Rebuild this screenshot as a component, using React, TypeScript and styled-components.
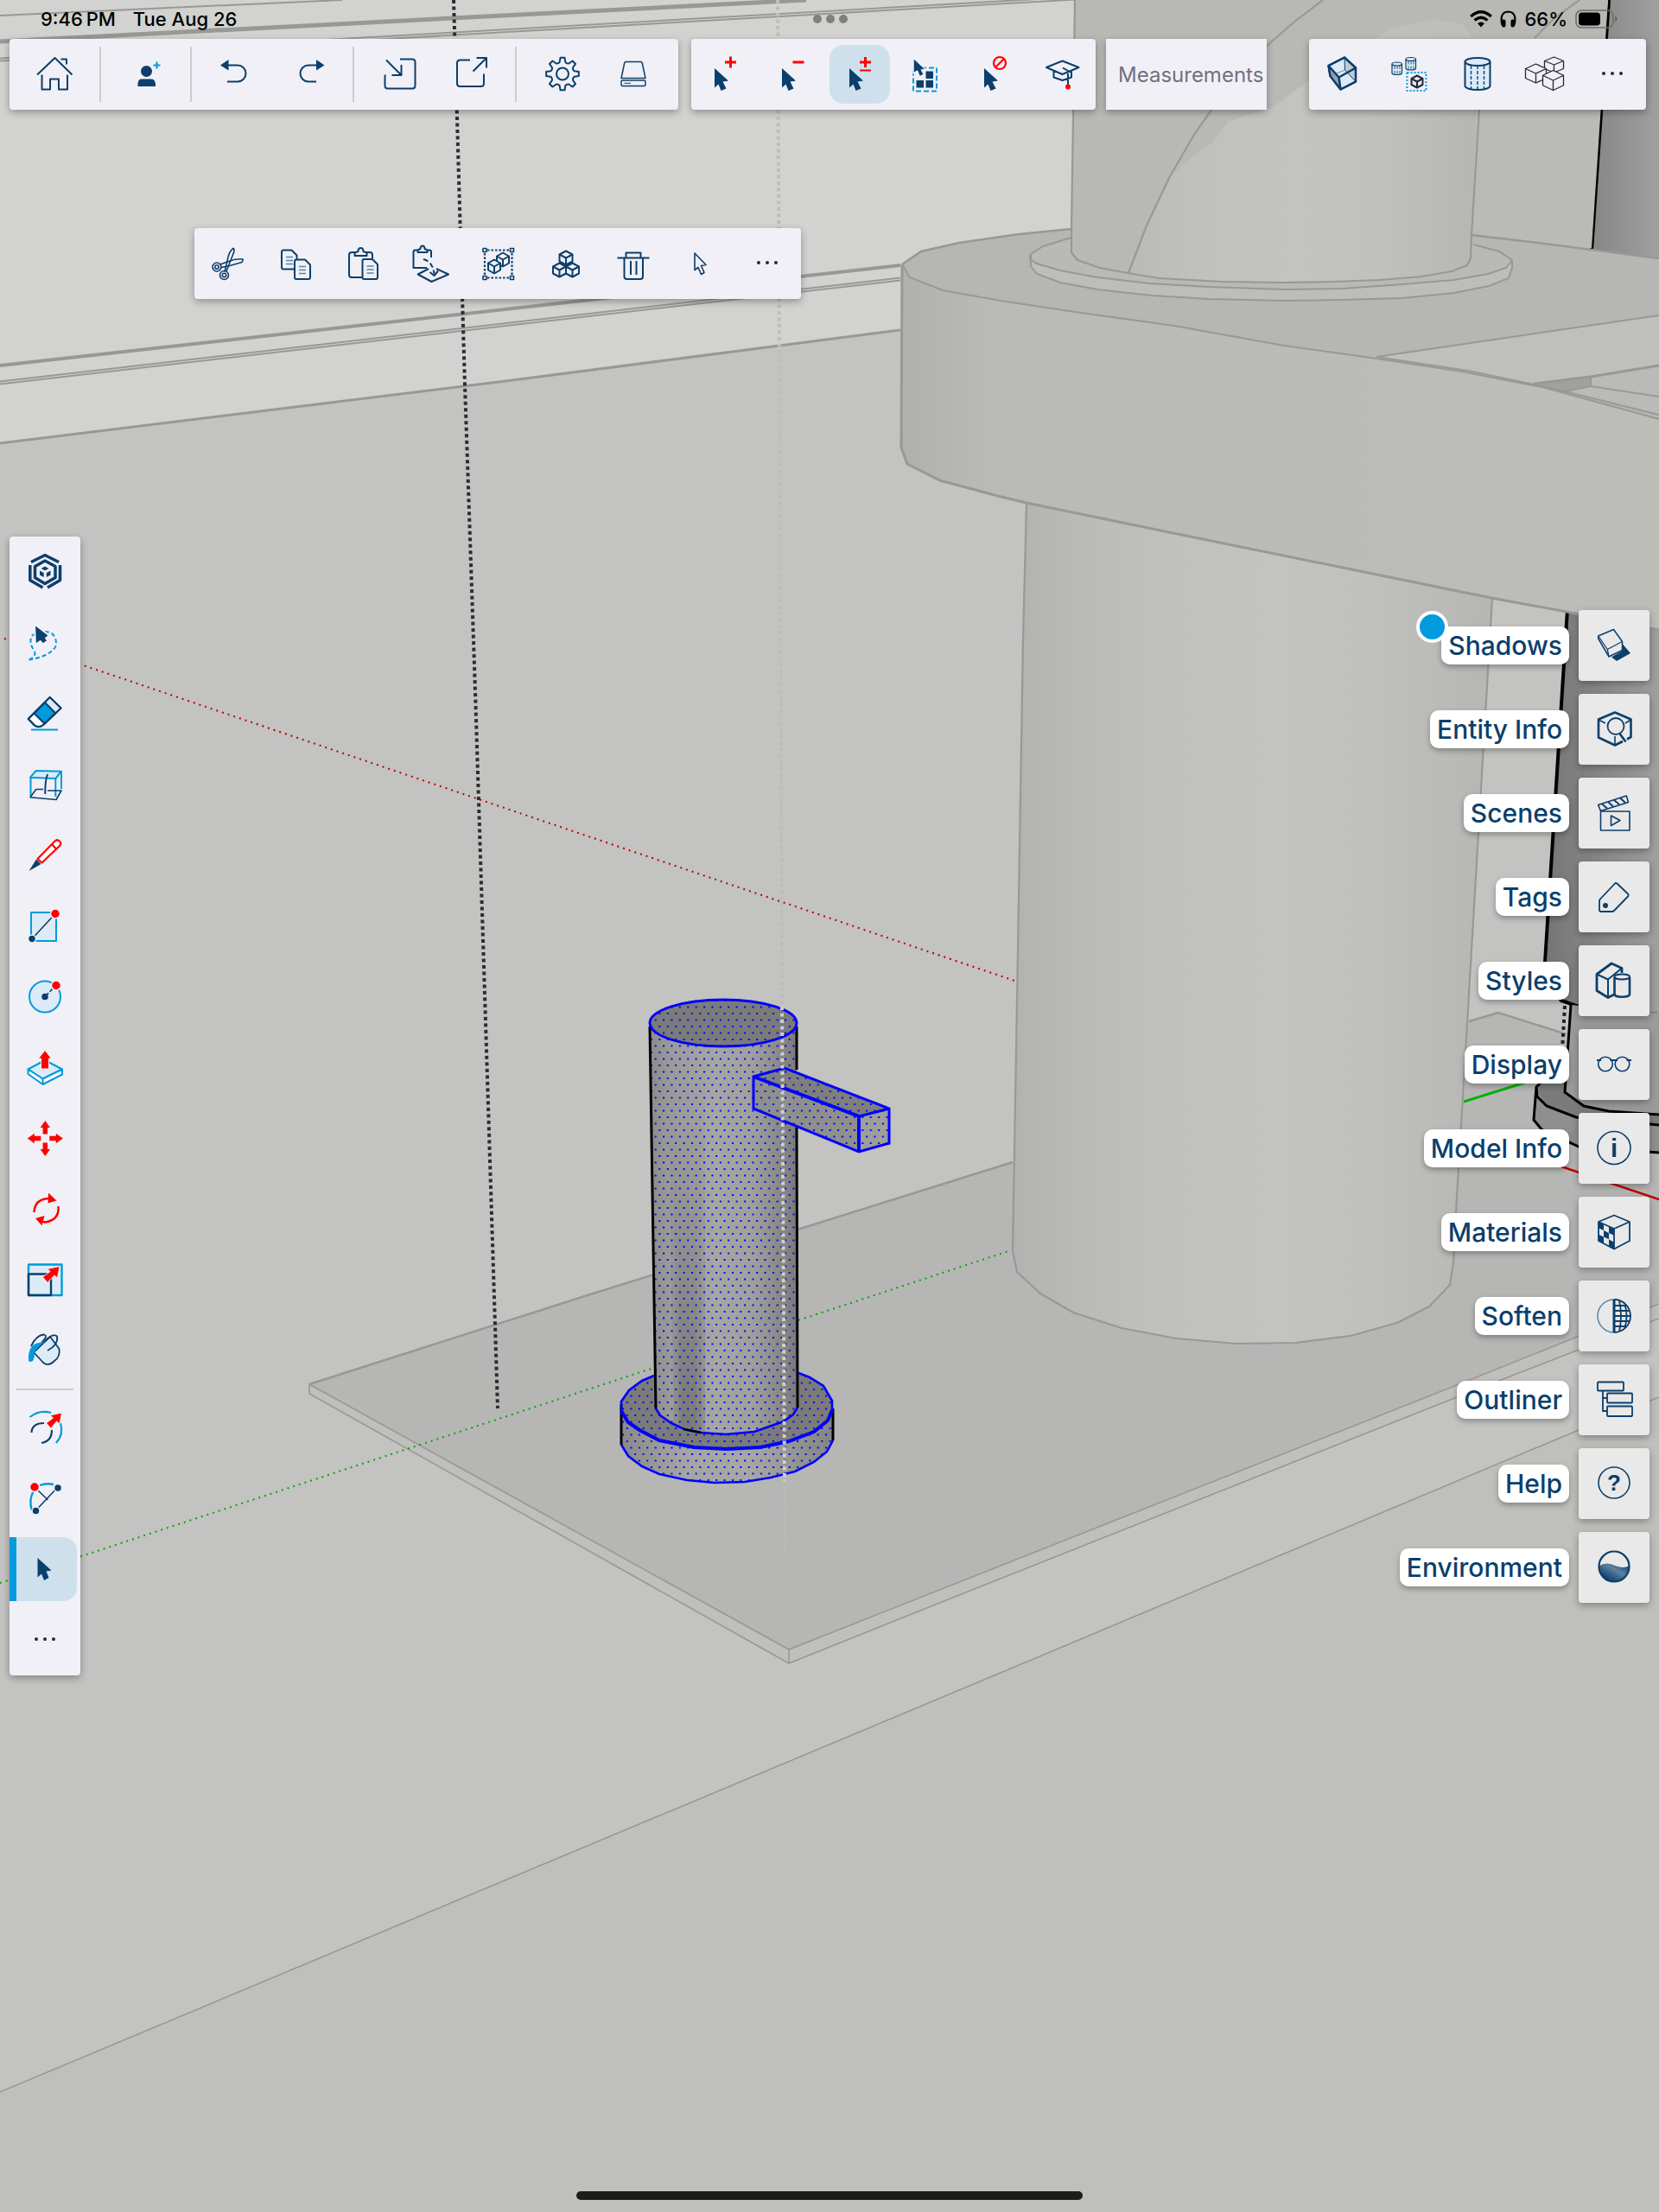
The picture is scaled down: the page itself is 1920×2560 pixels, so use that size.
import React from "react";
import styled, { createGlobalStyle, css } from "styled-components";

const NAVY = "#0b3f6c";
const BLUE = "#009bdc";
const PALE = "#dcebf7";
const RED = "#ff0000";
const INK = "#2b2536";

const GlobalStyle = createGlobalStyle`
  * { box-sizing: border-box; }
  html, body { margin: 0; padding: 0; }
  body {
    background: #bfbfba;
    font-family: Inter, "Liberation Sans", sans-serif;
    color: #000;
  }
`;

const Page = styled.div`
  position: relative;
  display: flex;
  flex-direction: column;
  min-height: 100vh;
  overflow: hidden;
`;

const SceneCanvas = styled.svg`
  position: absolute;
  inset: 0;
  width: 100%;
  height: 100%;
`;

const Surface = styled.div`
  position: relative;
  display: flex;
  flex-direction: column;
  flex: 1;
`;

/* ---------- status bar ---------- */

const StatusBar = styled.div`
  display: grid;
  grid-template-columns: 1fr auto 1fr;
  align-items: center;
  height: 45px;
  padding: 0 46px 2px 47px;
  font-size: 22px;
  line-height: 28px;
  font-weight: 500;
`;

const StatusLeft = styled.div`
  display: flex;
  gap: 20px;
`;

const StatusRight = styled.div`
  display: flex;
  justify-content: flex-end;
  align-items: center;
  gap: 9px;
`;

const Multitask = styled.button`
  display: flex;
  gap: 5px;
  padding: 0;
  border: 0;
  background: none;
`;

const MultitaskDot = styled.span`
  width: 10px;
  height: 10px;
  border-radius: 50%;
  background: #80807c;
`;

/* ---------- toolbars ---------- */

const panel = css`
  background: #f1f0f6;
  border-radius: 4px;
  box-shadow: 0 3px 8px rgba(0, 0, 0, 0.32);
`;

const Header = styled.header`
  display: flex;
  padding: 0 15px 0 11px;
`;

const Toolbar = styled.div`
  ${panel}
  display: flex;
  flex: none;
  height: 82px;
`;

const ModeToolbar = styled(Toolbar)`
  margin-left: 15px;
`;

const ViewToolbar = styled(Toolbar)`
  margin-left: auto;
`;

const ContextToolbar = styled(Toolbar)`
  align-self: flex-start;
  margin: 137px 0 0 225px;
`;

const Group = styled.div`
  display: flex;
  justify-content: center;
  min-width: 105px;
  padding: 0 10px;
`;

const Divider = styled.span`
  width: 2px;
  margin: 9px -1px;
  background: #cbcbd0;
`;

const ToolButton = styled.button<{ $width?: number; $active?: boolean }>`
  display: flex;
  align-items: center;
  justify-content: center;
  width: ${(p) => p.$width ?? 78}px;
  height: 82px;
  padding: 0;
  border: 0;
  background: none;
  ${(p) =>
    p.$active &&
    css`
      height: 68px;
      width: 70px;
      margin: 7px 4px;
      border-radius: 16px;
      background: #cee0ec;
    `}
`;

const Measurements = styled.input`
  width: 186px;
  height: 82px;
  margin-left: 12px;
  padding: 0 0 0 14px;
  border: 0;
  background: #f1f0f6;
  box-shadow: 0 3px 8px rgba(0, 0, 0, 0.32);
  font: 400 24px/28px Inter, "Liberation Sans", sans-serif;
  color: ${INK};
  &::placeholder {
    color: #73707f;
    opacity: 1;
  }
`;

/* ---------- side rails ---------- */

const Workspace = styled.main`
  display: flex;
  justify-content: space-between;
  align-items: flex-start;
  padding: 0 11px;
`;

const ToolRail = styled.nav`
  ${panel}
  display: flex;
  flex-direction: column;
  width: 82px;
  margin-top: 275px;
`;

const RailButton = styled.button<{ $active?: boolean }>`
  display: flex;
  align-items: center;
  justify-content: center;
  height: 82px;
  padding: 0;
  border: 0;
  background: none;
  ${(p) =>
    p.$active &&
    css`
      height: 74px;
      margin: 4px 4px 4px 0;
      padding-right: 4px;
      border-left: 8px solid ${BLUE};
      border-radius: 0 16px 16px 0;
      background: #cee0ec;
    `}
`;

const RailRule = styled.span`
  height: 2px;
  margin: 2px 8px;
  background: #cbcbd0;
`;

const PanelList = styled.aside`
  display: flex;
  flex-direction: column;
  gap: 15px;
  margin-top: 360px;
`;

const PanelRow = styled.div`
  display: flex;
  justify-content: flex-end;
  align-items: center;
  gap: 11px;
`;

const PanelLabel = styled.label`
  position: relative;
  height: 44px;
  padding: 0 8px;
  border-radius: 10px;
  background: #fff;
  box-shadow: 0 3px 6px rgba(0, 0, 0, 0.3);
  font-size: 30px;
  line-height: 44px;
  font-weight: 500;
  color: ${NAVY};
  white-space: nowrap;
`;

const NewBadge = styled.span`
  position: absolute;
  top: -18px;
  left: -29px;
  width: 37px;
  height: 37px;
  border: 4px solid #fff;
  border-radius: 50%;
  background: ${BLUE};
`;

const Tile = styled.button`
  display: flex;
  align-items: center;
  justify-content: center;
  width: 82px;
  height: 82px;
  padding: 0;
  border: 0;
  border-radius: 4px;
  background: #e9e9e9;
  box-shadow: 0 3px 8px rgba(0, 0, 0, 0.32);
`;

const HomeIndicator = styled.div`
  align-self: center;
  width: 586px;
  height: 10px;
  margin: auto 0 14px;
  border-radius: 5px;
  background: #1c1c1c;
`;

const Glyph = styled.svg`
  flex: none;
  width: 48px;
  height: 48px;
  fill: none;
  stroke: ${NAVY};
  stroke-width: 2;
  stroke-linejoin: round;
  overflow: visible;
`;

/* ---------- drawing helpers ---------- */

type P = [number, number];
const pts = (list: P[]) => list.map((p) => p.join(",")).join(" ");

function gearPath(cx: number, cy: number, teeth: number, outer: number, inner: number) {
  const out: string[] = [];
  const step = (Math.PI * 2) / teeth;
  for (let i = 0; i < teeth; i++) {
    const a = i * step - Math.PI / 2;
    const at = (r: number, d: number) =>
      `${(cx + r * Math.cos(a + d)).toFixed(2)} ${(cy + r * Math.sin(a + d)).toFixed(2)}`;
    out.push(`${i ? "L" : "M"}${at(outer, -0.13)} L${at(outer, 0.13)} L${at(inner, 0.24)}`);
    out.push(`Q${at(inner - 1.5, step / 2)} ${at(inner, step - 0.24)}`);
  }
  return out.join(" ") + "Z";
}

interface CubeProps { x: number; y: number; w: number; h: number; color?: string; fill?: string; sw?: number }
const Cube = ({ x, y, w, h, color = NAVY, fill = "none", sw = 2 }: CubeProps) => (
  <g stroke={color} strokeWidth={sw} fill={fill}>
    <path d={`M${x} ${y - h} L${x + w} ${y - h / 2} V${y + h / 2} L${x} ${y + h} L${x - w} ${y + h / 2} V${y - h / 2}Z`} />
    <path fill="none" d={`M${x - w} ${y - h / 2} L${x} ${y} L${x + w} ${y - h / 2} M${x} ${y} V${y + h}`} />
  </g>
);

interface CylProps { x: number; y: number; w: number; h: number; ry: number; sw: number; lines: number[] }
const Cylinder = ({ x, y, w, h, ry, sw, lines }: CylProps) => (
  <g strokeWidth={sw} fill={PALE}>
    <path d={`M${x} ${y + ry} V${y + h - ry} A${w / 2} ${ry} 0 0 0 ${x + w} ${y + h - ry} V${y + ry}`} />
    <ellipse cx={x + w / 2} cy={y + ry} rx={w / 2} ry={ry} />
    {lines.map((l) => (
      <path key={l} d={`M${x + l} ${y + ry * 2} V${y + h - 1}`} strokeDasharray="4 2" strokeWidth={sw * 0.7} />
    ))}
  </g>
);

const Cursor = ({ x = 12, y = 17, s = 1 }: { x?: number; y?: number; s?: number }) => (
  <path
    fill={NAVY}
    stroke="none"
    transform={`translate(${x} ${y}) scale(${s})`}
    d="M0 0 L16 14.5 L9.5 15.5 L13.5 23.5 L7.5 26 L4.5 18.5 L0 22.5Z"
  />
);

const Dots = () => (
  <g fill={INK} stroke="none">
    <circle cx="14" cy="23" r="2" />
    <circle cx="24" cy="23" r="2" />
    <circle cx="34" cy="23" r="2" />
  </g>
);

const Sheet = ({ x, y, w, h }: { x: number; y: number; w: number; h: number }) => (
  <g>
    <path
      fill="#f1f0f6"
      d={`M${x + 2} ${y} H${x + w - 6} L${x + w} ${y + 6} V${y + h - 2} Q${x + w} ${y + h} ${x + w - 2} ${y + h} H${x + 2} Q${x} ${y + h} ${x} ${y + h - 2} V${y + 2} Q${x} ${y} ${x + 2} ${y}Z`}
    />
    <path strokeWidth="1.5" stroke="#5b84a5" d={`M${x + 5} ${y + 8} h8 M${x + 5} ${y + 12} h8 M${x + 5} ${y + 16} h8`} />
  </g>
);

/* ---------- icons ---------- */

const icons: Record<string, React.ReactNode> = {
  home: (
    <path d="M3 24.500 L23.500 5 L43.500 24.500 M30.500 6.500 H37 V12.500 M8.500 24.500 V41.500 H18 V29.500 H28 V41.500 H38 V24.500" />
  ),
  user: (
    <>
      <g fill={NAVY} stroke="none">
        <circle cx="24.500" cy="20.500" r="6.500" />
        <path d="M14.500 38 V35 Q15 30 18 29.500 H31 Q34 30 35 35 V38Z" />
      </g>
      <path stroke={BLUE} d="M36.500 9.500 V17.500 M32.500 13.500 H40.500" />
    </>
  ),
  undo: (
    <>
      <path d="M14 13.500 H26 A9.500 9.500 0 0 1 26 32.500 H14" />
      <path fill={NAVY} stroke="none" d="M6 13.500 L15.500 7 V19.500Z" />
    </>
  ),
  redo: (
    <>
      <path d="M34 13.500 H24 A9.500 9.500 0 0 0 24 32.500 H33" />
      <path fill={NAVY} stroke="none" d="M42.500 13.500 L33 7 V19.500Z" />
    </>
  ),
  import: (
    <path d="M26 6.500 H40 Q43.500 6.500 43.500 10 V37 Q43.500 40.500 40 40.500 H12 Q8.500 40.500 8.500 37 V24.500 M10 7.500 L27 24.500 M27.500 13 V25 H16.500" />
  ),
  export: (
    <path d="M23 7.500 H11.500 Q8 7.500 8 11 V34.500 Q8 38 11.500 38 H35.500 Q39 38 39 34.500 V23.500 M26.500 20.500 L41.500 5.500 M30.500 5 H42 V16.500" />
  ),
  gear: (
    <>
      <path d={gearPath(26, 23.5, 8, 19, 14)} />
      <circle cx="26" cy="23.500" r="7" />
    </>
  ),
  drive: (
    <g strokeWidth="1.500">
      <path d="M15.500 9.500 H32.500 Q34 9.500 34.300 11 L38 28.500 H10 L13.700 11 Q14 9.500 15.500 9.500Z" />
      <rect x="10" y="31" width="28" height="6.500" rx="1.500" />
      <path d="M13.500 34.300 H21" strokeWidth="1" />
    </g>
  ),
  selAdd: (
    <>
      <Cursor />
      <path stroke={RED} strokeWidth="3" d="M30.500 3.500 V16.500 M24 10 H37" />
    </>
  ),
  selSub: (
    <>
      <Cursor />
      <path stroke={RED} strokeWidth="3" d="M24.500 10 H37.500" />
    </>
  ),
  selToggle: (
    <>
      <Cursor />
      <path stroke={RED} strokeWidth="3" d="M30.500 4 V16 M24 10 H37" />
      <path stroke={RED} strokeWidth="2" d="M24 19.500 H37" />
    </>
  ),
  selAll: (
    <>
      <rect x="8" y="16.500" width="27" height="27" stroke={BLUE} strokeDasharray="6 3" strokeWidth="2" />
      <path fill={NAVY} stroke="none" d="M22.500 20.500 h8.500 v8.500 h-8.500z M11.500 31 h8.500 v8.500 h-8.500z M22.500 31 h8.500 v8.500 h-8.500z" />
      <path fill={NAVY} stroke="#f1f0f6" strokeWidth="1.500" d="M8 5 L22 18 L17.500 19 L20.500 24 L15.500 27 L12.500 20 L8 23Z" />
    </>
  ),
  selNone: (
    <>
      <Cursor />
      <g stroke={RED} strokeWidth="2.200">
        <circle cx="30" cy="11" r="7" />
        <path d="M25 16 L35 6" />
      </g>
    </>
  ),
  learn: (
    <>
      <path d="M6 16 L24.500 8.500 L43.500 16 L24.500 24Z M14.500 20 V27.500 L24.500 31 L35 27.500 V20 M25 16.500 L31 20 V36" />
      <circle cx="31" cy="38.500" r="3" fill={RED} stroke="none" />
    </>
  ),
  cube: (
    <g transform="translate(-1.500 -1)">
      <path fill={PALE} d="M9 15 L27.500 5.500 L40.500 17.500 V33.500 L23 42.500 L11 27Z" />
      <path fill="#98a4ae" strokeWidth="1" d="M9 15 L21 28.500 L23 42.500 L11 27Z" />
      <path fill="#c2c9d0" strokeWidth="1" d="M27.500 5.500 L40.500 17.500 V33.500 L28 20Z" />
      <path strokeWidth="1" d="M11 27 L28 20" stroke="#7a8894" />
      <path strokeWidth="2.500" d="M9 15 L21 28.500 L40.500 17.500 M21 28.500 L23 42.500 M9 15 L27.500 5.500 L40.500 17.500 V33.500 L23 42.500 L11 27Z" />
    </g>
  ),
  xray: (
    <g transform="translate(-1.500 -1)">
      <Cylinder x={4.5} y={11} w={11.5} h={14.5} ry={2} sw={1.2} lines={[3, 6, 9]} />
      <Cylinder x={20.5} y={5.5} w={11.5} h={14.5} ry={2} sw={1.2} lines={[3, 6, 9]} />
      <rect x="22" y="23" width="22" height="21" stroke={BLUE} strokeDasharray="2 2" />
      <Cube x={33.5} y={33.5} w={6.5} h={7} color={INK} fill={PALE} sw={2} />
    </g>
  ),
  cylinder: <Cylinder x={9.5} y={5} w={29} h={37} ry={4.5} sw={2} lines={[7, 14.5, 22]} />,
  cubes: (
    <g transform="translate(-1 -1)">
      <Cube x={35.5} y={14} w={11} h={9} color={INK} fill="#f1f0f6" sw={1.3} />
      <Cube x={14.5} y={24} w={12} h={11} color={INK} fill="#f1f0f6" sw={1.3} />
      <Cube x={34.5} y={32} w={12} h={11.5} color={INK} fill="#f1f0f6" sw={1.3} />
    </g>
  ),
  more: <Dots />,
  cut: (
    <g strokeWidth="1.600">
      <path d="M30.500 6 Q25 9 23 21 L20 33.500 M30.500 6 L31 10 L25.500 24 L22 33" />
      <path d="M41.500 19 Q33 18 23 22 L15 25 M41.500 19 L40 22.500 L26 26.500 L16 28.500" />
      <circle cx="11" cy="28" r="5" />
      <circle cx="11" cy="28" r="2.200" />
      <circle cx="19.500" cy="37.500" r="5" />
      <circle cx="19.500" cy="37.500" r="2.200" />
    </g>
  ),
  copy: (
    <>
      <Sheet x={8} y={8.5} w={17.5} h={22} />
      <Sheet x={23} y={19.5} w={18} h={22.5} />
    </>
  ),
  paste: (
    <>
      <path d="M15 11 H11 Q8 11 8 14 V37 Q8 40 11 40 H23 M28 11 H32 Q35 11 35 14 V18" />
      <path d="M14.500 15 V11.500 L18.500 10 Q18.500 6 21.500 6 Q24.500 6 24.500 10 L28.500 11.500 V15Z" />
      <Sheet x={23.5} y={19} w={17.5} h={23} />
    </>
  ),
  pasteInPlace: (
    <>
      <path d="M9 8.500 H6.500 Q4.500 8.500 4.500 10.500 V29 H20 M21 8.500 H23 Q25 8.500 25 10.500 V17" />
      <path d="M9.500 11 V8.500 L12.500 7 Q12.500 3.500 15 3.500 Q17.500 3.500 17.500 7 L20.500 8.500 V11Z" />
      <path d="M22 30 L9.700 36.500 L25.500 45 L45 36.500 L31 30" />
      <path strokeDasharray="6 3" d="M16 19 Q27 22 28.500 36" />
      <path d="M23.500 34 L28.500 38 L33 32.500" />
    </>
  ),
  group: (
    <>
      <path strokeDasharray="2.500 2" strokeWidth="2.200" d="M12 8.500 H38 M12 40.500 H38 M9 12 V37 M40.500 12 V37" />
      <path fill="#f1f0f6" strokeWidth="1.600" d="M7 6.500 h4 v4 h-4z M38.500 6.500 h4 v4 h-4z M7 38.500 h4 v4 h-4z M38.500 38.500 h4 v4 h-4z" />
      <Cube x={30} y={19.5} w={7} h={8} fill="#f1f0f6" sw={2} />
      <Cube x={20} y={27.5} w={7} h={8} fill="#f1f0f6" sw={2} />
    </>
  ),
  component: (
    <>
      <Cube x={25} y={17.5} w={7.5} h={8} fill="#f1f0f6" sw={2} />
      <Cube x={17.5} y={31.5} w={7.5} h={8} fill="#f1f0f6" sw={2} />
      <Cube x={32.5} y={31.5} w={7.5} h={8} fill="#f1f0f6" sw={2} />
    </>
  ),
  trash: (
    <path d="M6.500 17.500 H43.500 M16.500 17.500 V11.500 H33.500 V17.500 M14.500 17.500 V39 Q14.500 42 17.500 42 H33 Q36 42 36 39 V17.500 M22 21 V37 M28.500 21 V37" />
  ),
  pointer: <path strokeWidth="1.600" d="M18 12 L31 25.500 L25.500 26.500 L29 34.500 L25.500 36.500 L22 28.500 L18 31.500Z" />,

  logo: (
    <>
      <g strokeWidth="3.500">
        <path d="M8 12.500 L24 4.500 L40 12.500" />
        <path d="M6.800 16 V33.500 L21.500 42 M41.500 16 V33.500 L27 42" />
      </g>
      <path strokeWidth="3.500" d="M24 11 L36 17.500 V30.500 L24 37.500 L12.500 30.500 V17.500Z" />
      <g fill={NAVY} stroke="none">
        <path d="M24 17.500 L28.500 20 L24 22.200 L19.500 20Z" />
        <path d="M18 22.500 L22.700 25 V30 L18 27.500Z" />
        <path d="M30.500 22.500 L25.800 25 V30 L30.500 27.500Z" />
      </g>
    </>
  ),
  lasso: (
    <>
      <path stroke={BLUE} strokeDasharray="5 3" d="M5.500 43.500 Q14 40 12 34 Q4 22 10 15 Q20 8 32 13 Q39 20 36 29 Q28 40 5.500 43.500" />
      <path fill={NAVY} stroke="#f1f0f6" d="M12 2.500 L29 15.500 L25 18.500 L27.500 21.500 L21.500 25.500 L18.500 22 L13 26Z" />
    </>
  ),
  eraser: (
    <>
      <path fill="#fff" d="M4.700 30 L29.700 5 L42.500 17.500 L22 37 Q17 41 12 37.500Z" />
      <path fill={PALE} stroke="none" d="M24 11 L29.700 5.800 L41.500 17.500 L36 22.500Z" />
      <path fill={BLUE} d="M11.500 23.500 L24 11 L36.300 23.500 L23.500 35.500Z" />
      <path d="M4.700 30 L29.700 5 L42.500 17.500 L22 37 Q17 41 12 37.500Z" />
      <path stroke={BLUE} d="M8 42.500 H39" />
    </>
  ),
  section: (
    <>
      <path fill={PALE} stroke={BLUE} d="M7 15.700 L13.700 8 L43 8.700 L36.300 17Z" />
      <path stroke={BLUE} d="M7.500 16 V37 M36.300 17 V38 M43 9 V29" />
      <path strokeWidth="1.600" d="M22 29.500 H13.700 L7 38.700 L37 41.500 L43 31 H27" />
      <path strokeWidth="2" d="M27 12 Q24 20 24.300 35" />
    </>
  ),
  pencil: (
    <>
      <path fill={NAVY} stroke="none" d="M5.500 42 L14 28.500 L19.500 34Z" />
      <path stroke={RED} fill="#fff" strokeWidth="2.200" d="M15.500 28 L35.500 7.500 Q38 5 41 7.500 Q43.500 10 41 13 L20.500 32.500Z M32 11 L37 16.500" />
    </>
  ),
  rectangle: (
    <>
      <rect x="8" y="8" width="29" height="33" fill={PALE} stroke={BLUE} />
      <path d="M9 38.500 L36 9.500" strokeWidth="1.600" />
      <circle cx="9" cy="38.500" r="4.500" fill={NAVY} stroke="#f1f0f6" strokeWidth="1.500" />
      <circle cx="36" cy="9.500" r="5.500" fill={RED} stroke="#f1f0f6" strokeWidth="1.500" />
    </>
  ),
  circle: (
    <>
      <circle cx="24" cy="23.500" r="18" fill={PALE} stroke={BLUE} />
      <path d="M24 23.500 L36 11" strokeDasharray="6 2" strokeWidth="1.600" />
      <circle cx="24" cy="23.500" r="3.800" fill={NAVY} stroke="none" />
      <circle cx="37" cy="10.500" r="5.500" fill={RED} stroke="#f1f0f6" strokeWidth="1.500" />
    </>
  ),
  pushPull: (
    <>
      <path fill={PALE} stroke={BLUE} d="M4.500 25.500 L24 15 L44 25.500 L21.500 36.500Z" />
      <path fill="#fff" stroke={BLUE} d="M4.500 25.500 L21.500 36.500 L44 25.500 V31.500 L21.500 43 L4.500 31Z M21.500 36.500 V43" />
      <path fill={RED} stroke="#f1f0f6" strokeWidth="1" d="M24 3.500 L31.500 13 H28.500 V25 H19.500 V13 H16.500Z" />
    </>
  ),
  move: (
    <g fill={RED} stroke="none">
      {[0, 90, 180, 270].map((r) => (
        <path key={r} transform={`rotate(${r} 24.3 23.5)`} d="M24.300 3 L30 11 H27 V18.500 H21.600 V11 H18.600Z" />
      ))}
    </g>
  ),
  rotate: (
    <>
      <path stroke={RED} strokeWidth="2.400" d="M11.500 27 Q12 12 28 11 L32 12 M39.500 20 Q41 36 24 38.500 L18 37" />
      <path fill={RED} stroke="none" d="M28 4.500 L37.500 13.500 L27.500 16.500Z M13 34 L23.500 31 L20.500 42.500Z" />
    </>
  ),
  scale: (
    <>
      <rect x="5" y="5.500" width="38.500" height="35.500" fill={PALE} stroke={BLUE} strokeWidth="2.400" />
      <rect x="5" y="16.500" width="26" height="24.500" strokeWidth="2.400" />
      <path fill={RED} stroke={PALE} strokeWidth="1" d="M41 7.500 L38.500 21 L35 18 L27 26.500 L21.500 20 L30 13.500 L27 10.500Z" />
    </>
  ),
  paint: (
    <>
      <path fill={PALE} strokeWidth="1.800" d="M11 25 L30 7 L40.500 21 Q42 30 35 35 Q28 42 22 37Z" />
      <path strokeWidth="1.800" d="M8 18 Q14 5 23 4.500 Q28 6 20 14 M25 11 Q33 3 38 6.500 Q40 16 27 23" />
      <path fill={BLUE} stroke="none" d="M5 35 Q4 16 17 14 L24 13 Q13 20 12 26 Q12 32 10 35 Q7 37 5 35Z" />
    </>
  ),
  offset: (
    <>
      <path stroke={BLUE} strokeWidth="2.200" d="M6.500 12 Q18 3 31 7 M42 19 Q46 32 37 42" />
      <path strokeWidth="2.200" d="M8.500 30 Q9 19 23 19 M32 27 Q32 40 20 42" />
      <path fill={RED} stroke="#f1f0f6" strokeWidth="1" d="M43.500 7 L41 20 L37.500 17 L31 25 L25.500 19 L33.500 13 L30 10Z" />
    </>
  ),
  arc: (
    <>
      <path stroke={BLUE} strokeWidth="2.400" d="M18 9 Q26 6 34 8 M10.500 16 Q5 27 9 38" />
      <path strokeWidth="1.600" d="M15 14 L27.500 26 M38 12 L13.500 38" />
      <circle cx="12" cy="11" r="5.500" fill={RED} stroke="#f1f0f6" strokeWidth="1.500" />
      <circle cx="39" cy="12" r="4.500" fill={NAVY} stroke="#f1f0f6" strokeWidth="1.500" />
      <circle cx="13.500" cy="38.500" r="4.500" fill={NAVY} stroke="#f1f0f6" strokeWidth="1.500" />
    </>
  ),
  select: <path fill={NAVY} stroke="none" d="M15.500 11 L31.500 25.500 L25.500 26.500 L28.500 34 L23 37 L20 29.500 L15.500 33.500Z" />,

  shadows: (
    <>
      <path fill={NAVY} stroke="none" d="M34 22.500 L43 33 L27 42 L21 37.500 L34 30Z" />
      <path strokeWidth="1.500" fill="#e9e9e9" d="M5.700 13 L23.500 5.500 L33.500 19.500 L33.500 29.500 L18 37 L5.700 16Z" />
      <path strokeWidth="1.300" d="M5.700 13 L16.300 28.500 L33.500 19.500 M16.300 28.500 L18 37" />
    </>
  ),
  entity: (
    <>
      <path strokeWidth="2.600" d="M34 38 L25 42.500 L6 33.500 V12.500 L25 4.500 L43.500 12.500 V33 L39 35.500" />
      <path strokeWidth="1.600" d="M6 13 L14 17 M43.500 13 L37 17 M25 42 V32" />
      <circle cx="26" cy="20.500" r="9.500" strokeWidth="1.800" />
      <path strokeWidth="2.600" d="M30.500 29 L37.500 38.500" />
    </>
  ),
  scenes: (
    <g strokeWidth="1.600">
      <rect x="8.500" y="22" width="33.500" height="22" />
      <path d="M5.700 14.600 L38.300 4 L40.500 11.500 L8.500 21.500Z" />
      <path d="M10 13.500 L16 18.500 M17 11 L23 16.500 M24 9 L30 14 M31 6.500 L37 12" strokeWidth="2" />
      <path d="M20.500 27 L31 32.500 L20.500 38.500Z" />
    </g>
  ),
  tags: (
    <>
      <path strokeWidth="1.800" d="M7 39 V29 Q7 27.500 8 26.500 L25 8.500 Q26 7.500 27.500 8.500 L40.500 21 Q41 22.500 40 23.500 L24 40 Q23 41 21.500 41 H9 Q7 41 7 39Z" />
      <circle cx="14" cy="34" r="3" fill={NAVY} stroke="none" />
    </>
  ),
  styles: (
    <>
      <path strokeWidth="2.800" d="M24 40 L17 43.500 L4 35.500 V16.500 L21 4 L33 9.500 V15" />
      <path strokeWidth="2" d="M4 16.500 L17 22.500 L33 9.500 M17 22.500 V43.500" />
      <path strokeWidth="2.600" fill="#e9e9e9" d="M24.500 20 V40 A8.800 3 0 0 0 42 40 V20" />
      <ellipse cx="33.300" cy="19.500" rx="8.800" ry="3" fill="#e9e9e9" strokeWidth="2" />
    </>
  ),
  display: (
    <g strokeWidth="1.600">
      <circle cx="14" cy="23.500" r="8.300" />
      <circle cx="33.500" cy="23.500" r="8.300" />
      <path d="M4 19 H9 M19.500 19 H28 M38.500 19 H44" strokeWidth="2" />
    </g>
  ),
  info: (
    <>
      <circle cx="24" cy="23.500" r="19" strokeWidth="1.600" />
      <text x="24" y="33.500" fontSize="29" fontWeight="600" textAnchor="middle" fill={NAVY} stroke="none">i</text>
    </>
  ),
  materials: (
    <>
      <path strokeWidth="1.800" d="M24 4.500 L42 12 V34 L24 43.500 L6 34 V12Z M6 12 L24 20 L42 12 M24 20 V43.500" />
      <g fill={NAVY} stroke="none">
        <path d="M6 12 L12 14.700 V22 L6 19.300Z M18 17.300 L24 20 V27.800 L18 25.100Z M12 22 L18 25 V32.300 L12 29.500Z" />
        <path d="M6 26.700 L12 29.500 V37 L6 34Z M18 32.500 L24 35.500 V43.500 L18 40.500Z" />
      </g>
    </>
  ),
  soften: (
    <>
      <path strokeWidth="1.500" stroke="#5b84a5" d="M24 5 A19 19 0 0 0 24 43" />
      <path strokeWidth="1.800" d="M24 5 A19 19 0 0 1 24 43 M24 12 H38 M24 18 H42 M24 24 H43 M24 30 H42 M24 36 H38 M30 6 Q34 24 30 42 M36 9 Q41 24 36 39" />
      <path strokeWidth="3" d="M24 5 V43" />
    </>
  ),
  outliner: (
    <g strokeWidth="1.800">
      <rect x="5" y="3.500" width="30" height="10" rx="1" />
      <rect x="16" y="16.500" width="29" height="11" rx="1" />
      <rect x="16" y="31.500" width="29" height="11.500" rx="1" />
      <path d="M11 13.500 V37 H16 M11 22 H16" />
    </g>
  ),
  help: (
    <>
      <circle cx="24" cy="23" r="18" strokeWidth="1.600" />
      <text x="24" y="32" fontSize="26" fontWeight="600" textAnchor="middle" fill={NAVY} stroke="none">?</text>
    </>
  ),
  environment: (
    <>
      <defs>
        <linearGradient id="sea" x1="0" x2="1" y1="1" y2="0">
          <stop offset="0.200" stopColor={NAVY} />
          <stop offset="0.600" stopColor="#5f80a0" />
          <stop offset="1" stopColor={NAVY} />
        </linearGradient>
      </defs>
      <path fill="url(#sea)" stroke="none" d="M6 23 Q14 17 24 21.500 Q34 26 42 22 A18 18 0 0 1 6 23Z" />
      <circle cx="24" cy="23" r="17.500" strokeWidth="2.200" />
    </>
  ),
};

const Icon = ({ name }: { name: string }) => (
  <Glyph viewBox="0 0 48 48" aria-hidden="true">
    {icons[name]}
  </Glyph>
);

/* ---------- 3D scene ---------- */

const EDGE = "#989896";

const columnBottom: P[] = [
  [1172, 1448], [1177, 1472], [1204, 1497], [1242, 1519], [1298, 1537], [1361, 1549], [1430, 1555], [1500, 1554],
  [1563, 1546], [1617, 1531], [1654, 1512], [1678, 1487], [1682, 1461], [1685, 1403],
];
const discRim: P[] = [
  [1044, 306], [1053, 321], [1091, 336], [1158, 348], [1244, 361], [1359, 377], [1486, 400], [1593, 415], [1692, 430],
  [1789, 449], [1920, 485],
];
const discLeft: P[] = [[1240, 265], [1179, 271], [1110, 281], [1066, 291], [1044, 306]];
const discFloor: P[] = [
  [1043, 518], [1050, 537], [1088, 556], [1155, 574], [1188, 582], [1353, 616], [1574, 661], [1726, 692], [1824, 710],
  [1920, 729],
];
const flangeRim: P[] = [
  [1192, 300], [1200, 305], [1227, 313], [1270, 321], [1330, 328], [1399, 332], [1485, 335], [1554, 334], [1623, 329],
  [1683, 324], [1722, 317], [1743, 310], [1750, 301],
];
const flangeBack: P[] = [[1735, 291], [1705, 283], [1600, 265], [1300, 265], [1240, 275], [1207, 285], [1193, 294]];
const flangeFoot: P[] = [
  [1750, 310], [1746, 322], [1723, 331], [1683, 339], [1623, 345], [1554, 347], [1485, 348], [1399, 346], [1333, 342],
  [1270, 335], [1227, 327], [1200, 317], [1192, 307],
];
const neckFoot: P[] = [
  [1240, 292], [1247, 301], [1273, 310], [1305, 316], [1341, 322], [1416, 326], [1485, 327], [1542, 326], [1597, 324],
  [1646, 320], [1680, 314], [1698, 307], [1702, 299], [1703, 273],
];
const bodyFoot: P[] = [
  [759, 1630], [764, 1638], [777, 1647], [792, 1654], [811, 1658], [840, 1660], [873, 1657], [907, 1645], [918, 1637],
  [923, 1629],
];
const baseRim: P[] = [
  [719, 1622], [728, 1609], [743, 1598], [757, 1592], [800, 1583], [880, 1583], [924, 1589], [937, 1594], [953, 1604],
  [963, 1621], [963, 1632], [958, 1644], [942, 1657], [913, 1668], [880, 1675], [841, 1677], [803, 1675], [763, 1667],
  [740, 1655], [727, 1646], [719, 1633],
];
const baseFront: P[] = [
  [719, 1633], [727, 1646], [740, 1655], [763, 1667], [803, 1675], [841, 1677], [880, 1675], [913, 1668], [942, 1657],
  [958, 1644], [963, 1632],
];
const baseFoot: P[] = [
  [964, 1667], [957, 1680], [942, 1692], [920, 1703], [892, 1710], [862, 1715], [827, 1716], [795, 1713], [763, 1706],
  [743, 1697], [727, 1685], [719, 1672],
];

const Scene = () => (
  <SceneCanvas viewBox="0 0 1920 2560" preserveAspectRatio="xMidYMin slice" aria-hidden="true">
    <defs>
      <linearGradient id="column">
        <stop offset="0" stopColor="#b2b2b0" />
        <stop offset="0.140" stopColor="#babab8" />
        <stop offset="0.300" stopColor="#c0c0bc" />
        <stop offset="0.550" stopColor="#c3c3c0" />
        <stop offset="0.750" stopColor="#c0c0bd" />
        <stop offset="1" stopColor="#b6b6b4" />
      </linearGradient>
      <linearGradient id="disc">
        <stop offset="0" stopColor="#b0b0ae" />
        <stop offset="0.120" stopColor="#babab8" />
        <stop offset="0.600" stopColor="#bbbbb9" />
        <stop offset="1" stopColor="#bdbdb8" />
      </linearGradient>
      <linearGradient id="tower">
        <stop offset="0" stopColor="#747474" />
        <stop offset="1" stopColor="#a0a0a0" />
      </linearGradient>
      <linearGradient id="body">
        <stop offset="0" stopColor="#8b8b88" />
        <stop offset="0.150" stopColor="#9c9c9a" />
        <stop offset="0.450" stopColor="#a6a6a3" />
        <stop offset="0.700" stopColor="#9f9f9c" />
        <stop offset="1" stopColor="#7a7a78" />
      </linearGradient>
      <linearGradient id="bodyShade" x1="0" x2="0" y1="0" y2="1">
        <stop offset="0" stopColor="#6e6e6c" stopOpacity="0" />
        <stop offset="0.600" stopColor="#6e6e6c" stopOpacity="0.200" />
        <stop offset="1" stopColor="#6e6e6c" stopOpacity="0.380" />
      </linearGradient>
      <linearGradient id="base">
        <stop offset="0" stopColor="#8a8a88" />
        <stop offset="0.300" stopColor="#a5a5a2" />
        <stop offset="0.600" stopColor="#a8a8a5" />
        <stop offset="1" stopColor="#848482" />
      </linearGradient>
      <pattern id="stipple" width="9.400" height="15" patternUnits="userSpaceOnUse">
        <rect x="1" y="2" width="2" height="2" fill="#0000ff" />
        <rect x="5.700" y="9.500" width="2" height="2" fill="#0000ff" />
      </pattern>
    </defs>

    {/* room */}
    <rect width="1920" height="2560" fill="#c3c3c1" />
    <path d="M0 0 H1260 V345 L1042 382 L902 400 L593 440 L0 513Z" fill="#d2d2d0" />
    <g stroke={EDGE} fill="none" strokeWidth="2">
      <path d="M0 18 L396 0" />
      <path strokeWidth="5" d="M0 48 L933 0" />
      <path strokeWidth="5" d="M0 69 L1244 -2" />
      <path strokeWidth="1" stroke="#d2d2cf" d="M0 69 L1244 -2" />
      <path strokeWidth="4" d="M0 423 L1042 307" />
      <path strokeWidth="5" d="M0 443 L1042 323" />
      <path strokeWidth="1" stroke="#d2d2cf" d="M0 443 L1042 323" />
      <path strokeWidth="3" d="M0 513 L593 440 L902 400 L1042 382" />
    </g>

    {/* floor slab */}
    <path d="M0 2421 L1196 1920 L1827 1655 L1920 1617 V2560 H0Z" fill="#bfbfbb" />
    <path d="M358 1602 L680 1499 L923 1423 L1172 1345 L1700 1182 L1734 1172 L1813 1197 L1920 1222 V1509 L1686 1603 L1100 1835 L913 1909Z" fill="#b6b6b5" />
    <path d="M358 1602 L913 1909 L1100 1835 L1686 1603 L1920 1509 V1526 L1686 1617 L1100 1850 L913 1925 L358 1613Z" fill="#bfbfbb" />
    <g stroke={EDGE} fill="none" strokeWidth="1.600">
      <path d="M0 2421 L1196 1920 L1827 1655 L1920 1617" />
      <path d="M358 1602 L913 1909 L1100 1835 L1686 1603 L1920 1509 M358 1602 V1613 L913 1925 L1100 1850 L1686 1617 L1920 1526 M913 1909 V1925" />
      <path strokeWidth="2.500" d="M358 1602 L680 1499 L923 1423 L1172 1345 M1700 1182 L1734 1172 L1813 1197" />
    </g>

    {/* axes */}
    <path d="M5 739 L1177 1136" stroke="#b80000" strokeWidth="2" strokeDasharray="2 5" />
    <path d="M0 1832 L1170 1447" stroke="#00a800" strokeWidth="2" strokeDasharray="2 5" />
    <path d="M1694 1275 L1790 1245" stroke="#00b400" strokeWidth="3" />
    <path d="M1780 1341 L1920 1388" stroke="#c00000" strokeWidth="2.500" />

    {/* right tower */}
    <path d="M1861 0 H1920 V1174 L1827 1165 L1788 1150 L1814 709 L1842 286Z" fill="url(#tower)" />
    <path d="M1862 0 L1842 290 M1814 705 L1787 1130 L1807 1158 L1827 1165 L1920 1174" fill="none" stroke="#000" strokeWidth="4" />
    <path d="M1788 1245 L1778 1257 L1775 1296 L1784 1307 L1827 1327 L1920 1334 V1240Z" fill="#8f8f8d" />
    <path d="M1788 1248 L1778 1260 L1790 1280 L1824 1293 L1920 1302 V1240Z" fill="#7b7b79" />
    <path d="M1818 1163 L1811 1264 L1833 1280 L1862 1286 L1920 1290 V1172Z" fill="#9b9b99" />
    <g fill="none" stroke="#000" strokeWidth="3">
      <path d="M1818 1163 L1811 1264 L1833 1280 L1862 1286 L1920 1290" />
      <path d="M1788 1248 L1778 1258 L1779 1269 L1790 1280 L1824 1293 L1920 1302 M1778 1258 L1775 1296 L1784 1307 L1827 1327 L1920 1334" />
      <path d="M1811 1164 L1808 1215" stroke="#222" strokeWidth="4" strokeDasharray="4 4" />
    </g>

    {/* lower column */}
    <path d={`M1188 570 L1184 740 L1178 1100 L${pts(columnBottom)} L1703 1100 L1727 690Z`} fill="url(#column)" />
    <path d={`M1188 582 L1184 740 L1178 1100 L${pts(columnBottom)} L1703 1100 L1727 692`} fill="none" stroke={EDGE} strokeWidth="2.200" />

    {/* disc */}
    <path d="M1700 0 H1861 L1842 287 L1703 272Z" fill="#babab6" />
    <path d={`M${pts(discLeft)} L${pts(discRim)} L1920 299 L1703 272Z`} fill="#b6b6b4" />
    <path d={`M${pts(discRim)} L${pts([...discFloor].reverse())}Z`} fill="url(#disc)" />
    <path d="M1593 413 L1920 365 V423 L1775 444Z" fill="#bfc0bb" />
    <path d="M1775 444 L1841 436 V447 L1811 453Z" fill="#a1a19f" />
    <path d="M1841 436 L1920 423 V480 L1811 453 L1841 447Z" fill="#babab8" />
    <g fill="none" stroke={EDGE} strokeWidth="2">
      <path d={`M${pts(discRim)}`} />
      <path strokeWidth="2.500" d={`M${pts(discLeft)} M1703 272 L1780 281 L1920 299`} />
      <path strokeWidth="3" d={`M1044 306 L${pts(discFloor)}`} />
      <path d="M1920 365 L1593 413 L1699 429 L1775 445 L1811 453 L1920 480 M1841 436 V447 L1920 459 M1811 453 L1841 447" />
      <path strokeWidth="3" d="M1775 444 L1841 436 L1920 423" />
    </g>

    {/* neck and flange */}
    <path d={`M${pts(flangeRim)} L${pts(flangeBack)}Z`} fill="#b9b9b7" />
    <path d={`M${pts(flangeRim)} L${pts(flangeFoot)}Z`} fill="#bdbdba" />
    <path d={`M1193 294 L${pts(flangeRim)} L1735 291 L1705 283 M1240 275 L1207 285 L1193 294 V307 M1750 301 L${pts(flangeFoot)}`} fill="none" stroke={EDGE} strokeWidth="2" />
    <path d={`M1244 0 L1240 265 L${pts(neckFoot)} L1714 0Z`} fill="url(#column)" />
    <path d="M1244 0 L1241 265 V292 L1247 301 L1305 316 L1327 261 L1353 206 L1376 184 L1403 165 L1421 141 L1473 124 L1515 93 L1592 44 L1704 44 L1712 126 L1850 126 L1861 0Z" fill="#b8b8b4" />
    <path d="M1592 44 L1608 33 L1658 22 L1693 28 L1704 44Z" fill="#bfbfba" />
    <path d={`M1244 0 L1240 265 L${pts(neckFoot)} L1712 126 M1306 316 L1327 261 L1353 206 L1383 154 L1403 126 L1466 53 L1497 26 L1531 0 M1776 44 L1800 20 L1828 0`} fill="none" stroke={EDGE} strokeWidth="2.200" />

    {/* guides */}
    <path d="M525 0 L538 446 L550 800 L576 1630" fill="none" stroke="#2e2e2e" strokeWidth="4" strokeDasharray="4 3.500" />
    <path d="M900 0 L902 408" fill="none" stroke="#bdbdbb" strokeWidth="4" strokeDasharray="4 3.500" />
    <path d="M902 408 L905 1130 L908 1802" fill="none" stroke="#bcbcba" strokeWidth="3" strokeDasharray="4 3.500" />

    {/* selected tap */}
    <path d={`M${pts(baseFront)} L${pts(baseFoot)}Z`} fill="url(#base)" />
    <path d={`M${pts(baseRim)}Z`} fill="#7b7b79" />
    <path d={`M752 1185 L${pts(bodyFoot)} L922 1185Z`} fill="url(#body)" />
    <g fill="url(#bodyShade)">
      <path d="M772 1211 H816 V1658 L780 1648Z" />
      <path d="M778 1300 H812 V1658 L785 1651Z" />
      <path d="M783 1380 H806 V1656 L789 1652Z" />
    </g>
    <ellipse cx="837" cy="1184" rx="85" ry="27" fill="#7b7b79" />
    <path d={`M719 1622 L719 1672 L${pts([...baseFoot].reverse())} L963 1621 L953 1604 L924 1589 L922 1184 Q918 1158 837 1157 Q756 1158 752 1184 L757 1592 L728 1609Z`} fill="url(#stipple)" />
    <path d="M872 1246 L908 1236 L1029 1283 L994 1292Z" fill="#7f7f7c" />
    <path d="M872 1246 L994 1292 V1333 L872 1283Z" fill="#8f8f8c" />
    <path d="M994 1292 L1029 1283 V1323 L994 1333Z" fill="#9e9e9b" />
    <path d="M872 1246 L908 1236 L1029 1283 V1323 L994 1333 L872 1283Z" fill="url(#stipple)" />
    <g fill="none" stroke="#000" strokeWidth="3">
      <path d="M752 1188 L759 1630 M922 1188 L922 1238 M922 1305 L923 1629" />
      <path d="M719 1625 V1672 M964 1630 V1667" />
    </g>
    <g fill="none" stroke="#0000ff" strokeWidth="2.600">
      <path d={`M757 1592 L743 1598 L728 1609 L719 1622 V1633 M963 1632 V1621 L953 1604 L937 1594 L924 1589 M${pts(baseFoot)} M${pts(bodyFoot)}`} />
      <path strokeWidth="4" d={`M${pts(baseFront)}`} />
      <ellipse cx="837" cy="1184" rx="85" ry="27" strokeWidth="3" />
      <path d="M872 1246 L908 1236 L1029 1283 V1323 L994 1333 L872 1283Z M994 1292 L1029 1283" strokeWidth="3" />
      <path d="M872 1246 L994 1292 V1333" strokeWidth="4" />
    </g>
    <path d="M791 1654 L811 1658" stroke="#000" strokeWidth="2.500" />
    <path d="M905 1165 L908 1714" stroke="#cfcfca" strokeWidth="4" strokeDasharray="4 3.500" />
  </SceneCanvas>
);

/* ---------- data ---------- */

type Tool = { icon: string; label: string; active?: boolean };

const mainGroups: Tool[][] = [
  [{ icon: "home", label: "Home" }],
  [{ icon: "user", label: "Add collaborator" }],
  [{ icon: "undo", label: "Undo" }, { icon: "redo", label: "Redo" }],
  [{ icon: "import", label: "Import" }, { icon: "export", label: "Export" }],
  [{ icon: "gear", label: "Settings" }, { icon: "drive", label: "Storage" }],
];

const modeTools: Tool[] = [
  { icon: "selAdd", label: "Add to selection" },
  { icon: "selSub", label: "Subtract from selection" },
  { icon: "selToggle", label: "Toggle selection", active: true },
  { icon: "selAll", label: "Select all" },
  { icon: "selNone", label: "Select none" },
  { icon: "learn", label: "Learn" },
];

const viewTools: Tool[] = [
  { icon: "cube", label: "Back edges" },
  { icon: "xray", label: "Hide rest of model" },
  { icon: "cylinder", label: "Hidden geometry" },
  { icon: "cubes", label: "Hidden objects" },
  { icon: "more", label: "More view options" },
];

const contextTools: Tool[] = [
  { icon: "cut", label: "Cut" },
  { icon: "copy", label: "Copy" },
  { icon: "paste", label: "Paste" },
  { icon: "pasteInPlace", label: "Paste in place" },
  { icon: "group", label: "Make group" },
  { icon: "component", label: "Make component" },
  { icon: "trash", label: "Delete" },
  { icon: "pointer", label: "Select" },
  { icon: "more", label: "More actions" },
];

const railTop: Tool[] = [
  { icon: "logo", label: "3D Warehouse" },
  { icon: "lasso", label: "Lasso" },
  { icon: "eraser", label: "Eraser" },
  { icon: "section", label: "Section plane" },
  { icon: "pencil", label: "Line" },
  { icon: "rectangle", label: "Rectangle" },
  { icon: "circle", label: "Circle" },
  { icon: "pushPull", label: "Push/Pull" },
  { icon: "move", label: "Move" },
  { icon: "rotate", label: "Rotate" },
  { icon: "scale", label: "Scale" },
  { icon: "paint", label: "Paint" },
];

const railBottom: Tool[] = [
  { icon: "offset", label: "Offset" },
  { icon: "arc", label: "Arc" },
  { icon: "select", label: "Select", active: true },
  { icon: "more", label: "More tools" },
];

const panels: { icon: string; label: string; isNew?: boolean }[] = [
  { icon: "shadows", label: "Shadows", isNew: true },
  { icon: "entity", label: "Entity Info" },
  { icon: "scenes", label: "Scenes" },
  { icon: "tags", label: "Tags" },
  { icon: "styles", label: "Styles" },
  { icon: "display", label: "Display" },
  { icon: "info", label: "Model Info" },
  { icon: "materials", label: "Materials" },
  { icon: "soften", label: "Soften" },
  { icon: "outliner", label: "Outliner" },
  { icon: "help", label: "Help" },
  { icon: "environment", label: "Environment" },
];

const Tools = ({ items, width }: { items: Tool[]; width?: number }) => (
  <>
    {items.map((t) => (
      <ToolButton key={t.icon} type="button" aria-label={t.label} aria-pressed={t.active} $active={t.active} $width={width}>
        <Icon name={t.icon} />
      </ToolButton>
    ))}
  </>
);

const Rail = ({ items }: { items: Tool[] }) => (
  <>
    {items.map((t) => (
      <RailButton key={t.icon} type="button" aria-label={t.label} aria-pressed={t.active} $active={t.active}>
        <Icon name={t.icon} />
      </RailButton>
    ))}
  </>
);

export default function App() {
  return (
    <>
      <GlobalStyle />
      <Page>
        <Scene />
        <Surface>
          <StatusBar>
            <StatusLeft>
              <span>9:46{"\u202F"}PM</span>
              <span>Tue Aug 26</span>
            </StatusLeft>
            <Multitask type="button" aria-label="Multitasking">
              <MultitaskDot />
              <MultitaskDot />
              <MultitaskDot />
            </Multitask>
            <StatusRight>
              <svg width="26" height="20" viewBox="0 0 26 20" aria-hidden="true">
                <g fill="none" stroke="#000" strokeWidth="3.200">
                  <path d="M1.200 7 Q13 -3.500 24.800 7" />
                  <path d="M5.500 11.500 Q13 5 20.500 11.500" />
                </g>
                <path d="M9 15 Q13 12 17 15 L13 19.500Z" />
              </svg>
              <svg width="19" height="20" viewBox="0 0 19 20" aria-hidden="true">
                <path d="M2.500 17 Q-1 2 9.500 1.500 Q20 2 16.500 17" fill="none" stroke="#000" strokeWidth="2.200" />
                <rect x="2" y="10.500" width="4.500" height="9" rx="2" />
                <rect x="12.500" y="10.500" width="4.500" height="9" rx="2" />
              </svg>
              <span>66%</span>
              <svg width="51" height="22" viewBox="0 0 51 22" aria-hidden="true">
                <rect x="1" y="1" width="43" height="20" rx="6.500" fill="none" stroke="#6f6f6d" strokeWidth="1.600" />
                <rect x="4" y="3.500" width="25" height="15" rx="4" />
                <path d="M46.500 7.500 Q50 11 46.500 14.500Z" fill="#555" />
              </svg>
            </StatusRight>
          </StatusBar>

          <Header>
            <Toolbar role="toolbar" aria-label="Main">
              {mainGroups.map((g, i) => (
                <React.Fragment key={g[0].icon}>
                  {i > 0 && <Divider />}
                  <Group>
                    <Tools items={g} width={84} />
                  </Group>
                </React.Fragment>
              ))}
            </Toolbar>
            <ModeToolbar role="toolbar" aria-label="Selection mode">
              <Tools items={modeTools} />
            </ModeToolbar>
            <Measurements type="text" placeholder="Measurements" aria-label="Measurements" />
            <ViewToolbar role="toolbar" aria-label="View">
              <Tools items={viewTools} />
            </ViewToolbar>
          </Header>

          <ContextToolbar role="toolbar" aria-label="Edit">
            <Tools items={contextTools} />
          </ContextToolbar>

          <Workspace>
            <ToolRail aria-label="Tools">
              <Rail items={railTop} />
              <RailRule />
              <Rail items={railBottom} />
            </ToolRail>
            <PanelList aria-label="Panels">
              {panels.map((p) => (
                <PanelRow key={p.icon}>
                  <PanelLabel htmlFor={`panel-${p.icon}`}>
                    {p.isNew && <NewBadge />}
                    {p.label}
                  </PanelLabel>
                  <Tile type="button" id={`panel-${p.icon}`}>
                    <Icon name={p.icon} />
                  </Tile>
                </PanelRow>
              ))}
            </PanelList>
          </Workspace>

          <HomeIndicator />
        </Surface>
      </Page>
    </>
  );
}
